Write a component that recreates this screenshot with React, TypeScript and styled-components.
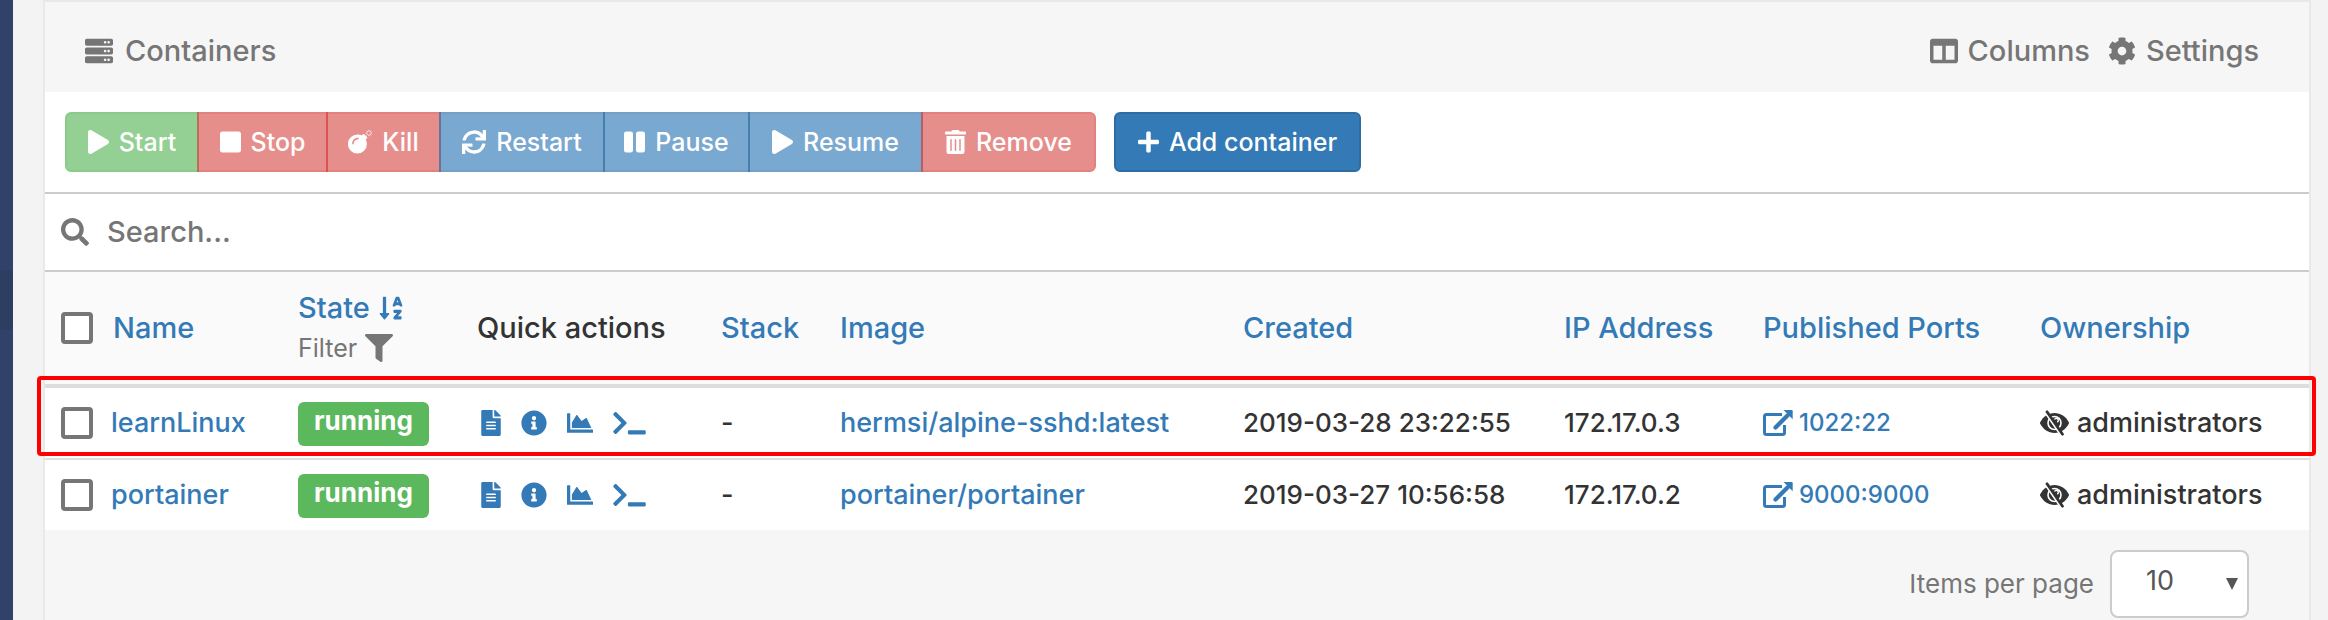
import React from "react";
import styled, { createGlobalStyle, css } from "styled-components";
import {
  FaServer, FaColumns, FaCog, FaPlay, FaStop, FaSync, FaPause, FaTrashAlt, FaPlus, FaSearch,
  FaSortAlphaDown, FaFilter, FaFileAlt, FaInfoCircle, FaChartArea, FaTerminal,
} from "react-icons/fa";

const GlobalStyle = createGlobalStyle`
  *, *::before, *::after { box-sizing: border-box; }
  body {
    margin: 0;
    background: #f3f3f3;
    color: #333;
    font-family: Inter, "Open Sans", sans-serif;
    font-size: 27px;
    font-weight: 500;
    line-height: 38px;
  }
  button, input, select { font: inherit; color: inherit; }
  a { color: #337ab7; text-decoration: none; }
  svg { display: block; flex: none; }
`;

const Page = styled.div`
  display: flex;
  min-height: 100vh;
`;

const Sidebar = styled.nav`
  flex: none;
  display: flex;
  flex-direction: column;
  width: 13px;
  padding-top: 270px;
  background: #30426a;
`;

const SidebarItem = styled.a`
  height: 60px;
  background: #2d3e63;
`;

const Main = styled.main`
  flex: 1;
  min-width: 0;
  padding: 0 17px 0 30px;
`;

const Widget = styled.section`
  min-height: 100vh;
  border: 2px solid #e9e9e9;
  border-bottom: 0;
  background: #f6f6f6;
`;

const WidgetHeader = styled.header`
  display: flex;
  align-items: center;
  justify-content: space-between;
  height: 90px;
  padding: 8px 50px 0 40px;
  color: #767676;
  font-size: 29px;
`;

const Title = styled.h1`
  display: flex;
  align-items: center;
  gap: 12px;
  margin: 0;
  font: inherit;
`;

const HeaderTools = styled.div`
  display: flex;
  gap: 18px;
`;

const ToolButton = styled.button`
  display: flex;
  align-items: center;
  gap: 10px;
  padding: 0;
  border: 0;
  background: none;
`;

const ActionBar = styled.div`
  display: flex;
  gap: 18px;
  padding: 20px;
  border-bottom: 2px solid #ccc;
  background: #fff;
`;

const ButtonGroup = styled.div`
  display: flex;
`;

type Tone = "success" | "danger" | "primary";
const tones: Record<Tone, [string, string]> = {
  success: ["#5cb85c", "#4cae4c"],
  danger: ["#d9534f", "#d43f3a"],
  primary: ["#337ab7", "#2e6da4"],
};

const Button = styled.button<{ $tone: Tone; $width: number }>`
  display: flex;
  align-items: center;
  justify-content: center;
  gap: 10px;
  min-width: ${(p) => p.$width}px;
  height: 60px;
  padding: 0 8px;
  border: 2px solid ${(p) => tones[p.$tone][1]};
  border-radius: 6px;
  background: ${(p) => tones[p.$tone][0]};
  color: #fff;
  font-size: 25px;
  white-space: nowrap;
  &:disabled { opacity: 0.65; }
  ${ButtonGroup} & { border-radius: 0; }
  ${ButtonGroup} &:first-child { border-radius: 6px 0 0 6px; }
  ${ButtonGroup} &:last-child { border-radius: 0 6px 6px 0; }
  ${ButtonGroup} &:not(:first-child) { margin-left: -2px; }
`;

const Icon = styled.span<{ $width: number }>`
  display: block;
  flex: none;
  width: ${(p) => p.$width}px;
  svg { width: 100%; }
`;

const SearchBar = styled.label`
  display: flex;
  align-items: center;
  gap: 18px;
  height: 78px;
  padding: 0 16px;
  border-bottom: 2px solid #ccc;
  background: #fff;
  color: #767676;
`;

const SearchInput = styled.input`
  flex: 1;
  padding: 0;
  border: 0;
  outline: 0;
  background: none;
  font-size: 29px;
  &::placeholder { color: #767676; opacity: 1; }
`;

const Table = styled.table`
  width: 100%;
  table-layout: fixed;
  border-collapse: separate;
  border-spacing: 0;
  background: #fff;
`;

const HeadCell = styled.th`
  height: 116px;
  padding: 0 0 0 16px;
  border-bottom: 4px solid #ddd;
  background: #fafafa;
  font-size: 29px;
  font-weight: 500;
  line-height: 40px;
  text-align: left;
  white-space: nowrap;
`;

const Cell = styled.td<{ $numeric?: boolean }>`
  height: 70px;
  padding: 0 0 0 16px;
  font-size: ${(p) => (p.$numeric ? 26 : 27)}px;
  white-space: nowrap;
`;

const Row = styled.tr<{ $highlighted?: boolean }>`
  position: relative;
  &:not(:first-child) ${Cell} {
    height: 72px;
    border-top: 2px solid #ddd;
  }
  ${(p) => p.$highlighted && css`
    ${Cell}:first-child::after {
      content: "";
      position: absolute;
      inset: -12px -7px 2px -8px;
      border: 4px solid #f00;
      border-radius: 4px;
      pointer-events: none;
    }
  `}
`;

const Inline = styled.div<{ $gap: number }>`
  display: flex;
  align-items: center;
  gap: ${(p) => p.$gap}px;
`;

const Checkbox = styled.input`
  appearance: none;
  flex: none;
  width: 32px;
  height: 32px;
  margin: 0;
  border: 4px solid #767676;
  border-radius: 4px;
  background: #fff;
`;

const FilterButton = styled.button`
  display: flex;
  align-items: center;
  gap: 8px;
  padding: 0;
  border: 0;
  background: none;
  color: #767676;
  font-size: 25px;
  font-weight: 400;
`;

const Badge = styled.span`
  display: block;
  width: fit-content;
  margin-top: 2px;
  padding: 0 16px 6px;
  border-radius: 6px;
  background: #5cb85c;
  color: #fff;
  font-size: 26px;
  font-weight: 700;
`;

const QuickActions = styled.div`
  display: flex;
  align-items: center;
  gap: 20px;
  padding-left: 4px;
`;

const PortLink = styled.a`
  display: flex;
  align-items: center;
  gap: 6px;
  font-size: 24px;
`;

const Footer = styled.footer`
  display: flex;
  justify-content: flex-end;
  padding: 20px 60px 0 0;
  color: #767676;
  font-size: 26px;
  font-weight: 400;
`;

const PageSize = styled.label`
  display: flex;
  align-items: center;
  gap: 16px;
`;

const SelectBox = styled.span`
  position: relative;
  &::after {
    content: "";
    position: absolute;
    top: 28px;
    right: 11px;
    border: solid transparent;
    border-width: 12px 6px 0;
    border-top-color: #555;
    pointer-events: none;
  }
`;

const Select = styled.select`
  appearance: none;
  display: block;
  width: 139px;
  height: 68px;
  padding: 0 34px 6px;
  border: 2px solid #ccc;
  border-radius: 8px;
  background: #fff;
  color: #555;
  font-size: 27px;
`;

const BombIcon = () => (
  <svg viewBox="0 0 24 24" height={24} fill="currentColor" aria-hidden="true">
    <path d="M9.5 4.6c1.8 0 3 .4 4.100 1l1.400-1.400c.4-.4.9-.4 1.300 0l2.700 2.700c.4.400.4.900 0 1.300l-1.300 1.300c.7 1.300 1.200 2.900 1.200 4.600A9.500 9.500 0 1 1 9.500 4.600ZM4.200 13.600c0 1.300 1.600 1.300 1.600 0 0-2.500 1.600-4.200 4-4.200 1.300 0 1.300-1.600 0-1.600-3.400 0-5.600 2.400-5.600 5.800Z" fillRule="evenodd" />
    <path d="M21 0v1.600M21 4.600v1.600M17.900 3.100h1.600M22.400 3.100H24M18.800.9l1 1M22.200 4.300l1 1M23.200.9l-1 1M19.800 4.300l-1 1" stroke="currentColor" strokeWidth="1" fill="none" />
  </svg>
);

const ExternalLinkIcon = () => (
  <svg viewBox="0 0 30 26" height={26} fill="none" stroke="currentColor" strokeWidth="3" aria-hidden="true">
    <path d="M19 4.500H3.500a2 2 0 0 0-2 2V22.500a2 2 0 0 0 2 2H19.500a2 2 0 0 0 2-2V15" />
    <path d="M12.500 17.500 24.500 5.500" strokeWidth="4.200" strokeLinecap="round" />
    <path d="M20.500 0H28.500a1.200 1.200 0 0 1 1.200 1.200V9.200Z" fill="currentColor" stroke="none" />
  </svg>
);

const EyeSlashIcon = () => (
  <svg viewBox="0 0 29 26" height={26} fill="none" aria-hidden="true">
    <path d="M.2 13.800a2 2 0 0 1 0-1.600C3.200 6.500 8.400 3 14.500 3s11.300 3.500 14.300 9.200a2 2 0 0 1 0 1.600C25.800 19.500 20.600 23 14.500 23S3.200 19.500.2 13.800Z" fill="currentColor" />
    <circle cx="14.500" cy="13" r="6.500" stroke="#fff" strokeWidth="1.600" />
    <path d="M14.500 9.500a2 2 0 1 1 2.800 2.600" stroke="#fff" strokeWidth="1.400" />
    <path d="M5 1.800 21 25" stroke="#fff" strokeWidth="2.400" />
    <path d="M7 1.800 22.500 24.200" stroke="currentColor" strokeWidth="2.800" strokeLinecap="round" />
  </svg>
);

const columnWidths = [237, 179, 244, 119, undefined, 321, 199, 277, 285];

const rows = [
  { name: "learnLinux", image: "hermsi/alpine-sshd:latest", created: "2019-03-28 23:22:55", ip: "172.17.0.3", port: "1022:22", highlighted: true },
  { name: "portainer", image: "portainer/portainer", created: "2019-03-27 10:56:58", ip: "172.17.0.2", port: "9000:9000" },
];

export default function App() {
  return (
    <>
      <GlobalStyle />
      <Page>
        <Sidebar><SidebarItem href="#containers" aria-label="Containers" /></Sidebar>
        <Main>
          <Widget>
            <WidgetHeader>
              <Title><FaServer size={28} />Containers</Title>
              <HeaderTools>
                <ToolButton><FaColumns size={28} />Columns</ToolButton>
                <ToolButton><FaCog size={28} />Settings</ToolButton>
              </HeaderTools>
            </WidgetHeader>
            <ActionBar>
              <ButtonGroup>
                <Button disabled $tone="success" $width={134}><Icon $width={21}><FaPlay size={24} /></Icon>Start</Button>
                <Button disabled $tone="danger" $width={131}><Icon $width={21}><FaStop size={24} /></Icon>Stop</Button>
                <Button disabled $tone="danger" $width={115}><Icon $width={24}><BombIcon /></Icon>Kill</Button>
                <Button disabled $tone="primary" $width={166}><Icon $width={24}><FaSync size={24} /></Icon>Restart</Button>
                <Button disabled $tone="primary" $width={147}><Icon $width={21}><FaPause size={24} /></Icon>Pause</Button>
                <Button disabled $tone="primary" $width={175}><Icon $width={21}><FaPlay size={24} /></Icon>Resume</Button>
                <Button disabled $tone="danger" $width={175}><Icon $width={21}><FaTrashAlt size={24} /></Icon>Remove</Button>
              </ButtonGroup>
              <Button $tone="primary" $width={247}><Icon $width={21}><FaPlus size={24} /></Icon>Add container</Button>
            </ActionBar>
            <SearchBar>
              <FaSearch size={28} />
              <SearchInput type="text" aria-label="Search" placeholder="Search..." />
            </SearchBar>
            <Table>
              <colgroup>{columnWidths.map((width, i) => <col key={i} width={width} />)}</colgroup>
              <thead>
                <tr>
                  <HeadCell><Inline $gap={20}><Checkbox type="checkbox" aria-label="Select all" /><a href="#name">Name</a></Inline></HeadCell>
                  <HeadCell>
                    <a href="#state"><Inline $gap={8}>State<FaSortAlphaDown size={26} /></Inline></a>
                    <FilterButton>Filter<FaFilter size={28} /></FilterButton>
                  </HeadCell>
                  <HeadCell>Quick actions</HeadCell>
                  <HeadCell><a href="#stack">Stack</a></HeadCell>
                  <HeadCell><a href="#image">Image</a></HeadCell>
                  <HeadCell><a href="#created">Created</a></HeadCell>
                  <HeadCell><a href="#ip">IP Address</a></HeadCell>
                  <HeadCell><a href="#ports">Published Ports</a></HeadCell>
                  <HeadCell><a href="#ownership">Ownership</a></HeadCell>
                </tr>
              </thead>
              <tbody>
                {rows.map((row) => (
                  <Row key={row.name} $highlighted={row.highlighted}>
                    <Cell><Inline $gap={18}><Checkbox type="checkbox" aria-label={`Select ${row.name}`} /><a href="#container">{row.name}</a></Inline></Cell>
                    <Cell><Badge>running</Badge></Cell>
                    <Cell>
                      <QuickActions>
                        <a href="#logs" aria-label="Logs"><Icon $width={20}><FaFileAlt size={26} /></Icon></a>
                        <a href="#inspect" aria-label="Inspect"><Icon $width={26}><FaInfoCircle size={26} /></Icon></a>
                        <a href="#stats" aria-label="Stats"><Icon $width={26}><FaChartArea size={26} /></Icon></a>
                        <a href="#console" aria-label="Console"><Icon $width={33}><FaTerminal size={26} /></Icon></a>
                      </QuickActions>
                    </Cell>
                    <Cell>-</Cell>
                    <Cell><a href="#image">{row.image}</a></Cell>
                    <Cell $numeric>{row.created}</Cell>
                    <Cell $numeric>{row.ip}</Cell>
                    <Cell><PortLink href="#port"><ExternalLinkIcon />{row.port}</PortLink></Cell>
                    <Cell><Inline $gap={8}><EyeSlashIcon />administrators</Inline></Cell>
                  </Row>
                ))}
              </tbody>
            </Table>
            <Footer>
              <PageSize>
                Items per page
                <SelectBox>
                  <Select defaultValue="10">
                    <option>10</option>
                    <option>25</option>
                    <option>50</option>
                    <option>100</option>
                  </Select>
                </SelectBox>
              </PageSize>
            </Footer>
          </Widget>
        </Main>
      </Page>
    </>
  );
}
